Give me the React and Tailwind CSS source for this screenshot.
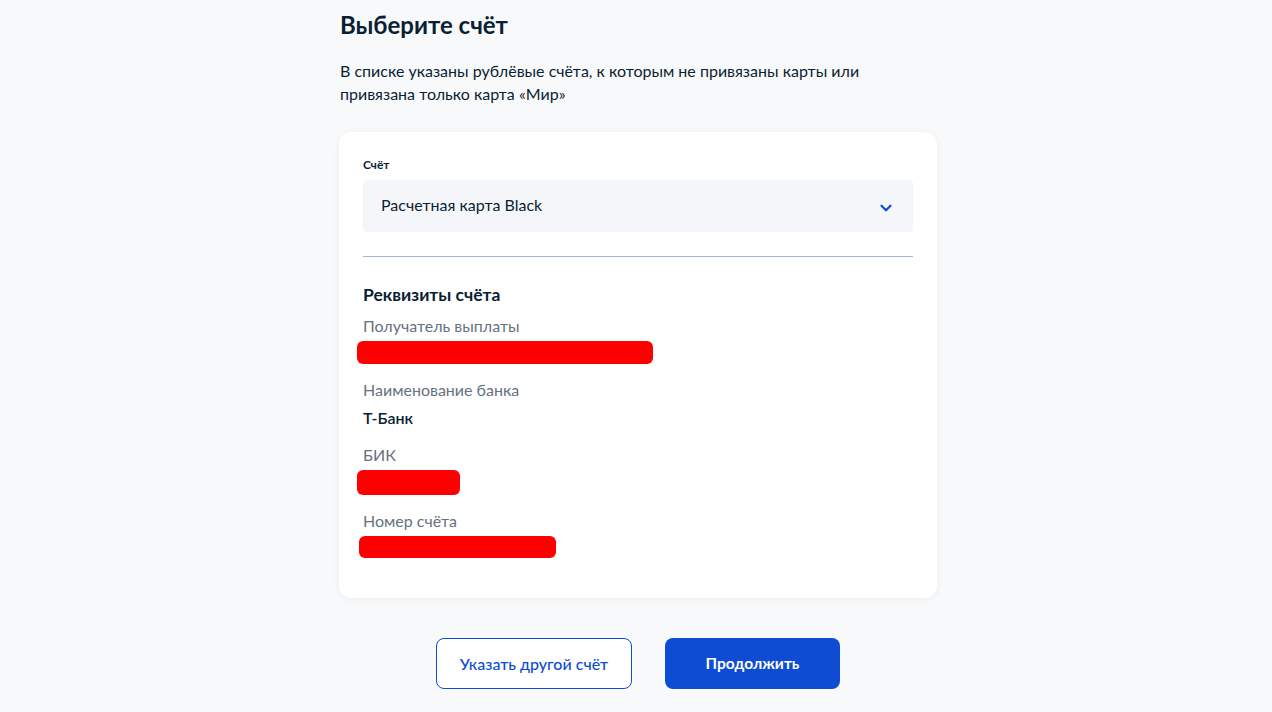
import { ChevronDown } from 'lucide-react';

const fields = [
  { label: 'Получатель выплаты', redacted: 'w-[296px] h-[23px] ml-[-6px]' },
  { label: 'Наименование банка', value: 'Т-Банк' },
  { label: 'БИК', redacted: 'w-[103px] h-[25px] ml-[-6px]' },
  { label: 'Номер счёта', redacted: 'w-[197px] h-[22px] ml-[-4px]' },
];

const App = () => {
  return (
    <div className="min-h-[712px] bg-[#f8f9fb] text-[#0b1f33] font-['Lato','Noto_Sans',sans-serif] flex justify-center pl-[4px]">
      <div className="w-[598px]">
        <h1 className="mt-[9px] text-[24px] leading-[32px] font-bold pl-[1px]">Выберите счёт</h1>
        <p className="mt-[18px] text-[16px] leading-[23px] pl-[1px] w-[560px]">
          В списке указаны рублёвые счёта, к которым не привязаны карты или привязана только карта «Мир»
        </p>

        {/* account card */}
        <div className="mt-[27px] bg-white rounded-[12px] shadow-[0_1px_6px_rgba(11,31,51,0.06)] px-[24px] pt-[25px] pb-[40px]">
          <div className="text-[12px] leading-[16px] font-bold">Счёт</div>
          <button
            type="button"
            className="mt-[7px] w-full h-[52px] bg-[#f5f6f9] rounded-[4px] flex items-center justify-between pl-[18px] pr-[18px] text-[16px]"
          >
            <span className="mb-[3px]">Расчетная карта Black</span>
            <ChevronDown size={18} strokeWidth={3} className="text-[#0d4cd3] mt-[4px]" />
          </button>

          <div className="mt-[24px] border-t border-[#a3b5da]" />

          <h2 className="mt-[26px] text-[17.5px] leading-[24px] font-bold">Реквизиты счёта</h2>
          <div className="flex flex-col">
            {fields.map((f, i) => (
              <div key={f.label} className={i === 0 ? 'mt-[8px]' : 'mt-[15px]'}>
                <div className="text-[16px] leading-[22px] text-[#66727f]">{f.label}</div>
                {f.value ? (
                  <div className="mt-[6px] text-[16px] leading-[22px] font-semibold">{f.value}</div>
                ) : (
                  <div className={`mt-[4px] bg-[#ff0000] rounded-[6px] ${f.redacted}`} />
                )}
              </div>
            ))}
          </div>
        </div>

        <div className="mt-[40px] flex justify-center gap-[33px]">
          <button
            type="button"
            className="w-[196px] h-[51px] rounded-[8px] border border-[#0d4cd3] bg-white text-[#0d4cd3] text-[16px] font-medium"
          >
            Указать другой счёт
          </button>
          <button
            type="button"
            className="w-[175px] h-[51px] rounded-[8px] bg-[#0d4cd3] text-white text-[15.5px] font-bold"
          >
            Продолжить
          </button>
        </div>
      </div>
    </div>
  );
};

export default App;
